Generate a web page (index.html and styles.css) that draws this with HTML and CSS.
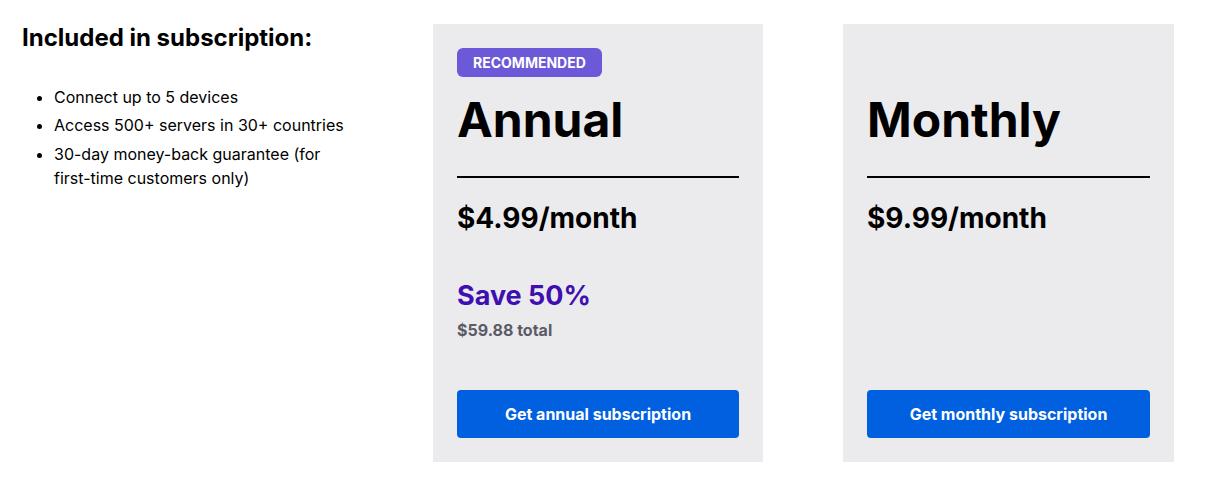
FILE: index.html
```html
<!DOCTYPE html>
<html>
  <head>
    <meta charset="UTF-8">
    <meta name="viewport" content="width=device-width, initial-scale=1.0">
    <title>Subscription plans</title>
    <link rel="stylesheet" href="styles.css">
  </head>
  <body>
  <div id="plans">
    <!-- what you get -->
    <div class="included">
      <h2>Included in subscription:</h2>
      <ul>
        <li>Connect up to 5 devices</li>
        <li>Access 500+ servers in 30+ countries</li>
        <li>30-day money-back guarantee (for first-time customers only)</li>
      </ul>
    </div>

    <!-- annual plan -->
    <div class="card">
      <span class="badge">Recommended</span>
      <h1>Annual</h1>
      <div class="price">$4.99/month</div>
      <div class="save">Save 50%</div>
      <div class="total">$59.88 total</div>
      <button class="buy">Get annual subscription</button>
    </div>

    <!-- monthly plan -->
    <div class="card">
      <span class="badge hide">Recommended</span>
      <h1>Monthly</h1>
      <div class="price">$9.99/month</div>
      <button class="buy">Get monthly subscription</button>
    </div>
  </div>
  </body>
</html>
```

FILE: styles.css
```css
/* pricing page */
body {
  margin: 0;
  font-family: Inter, "Liberation Sans", sans-serif;
  color: #000;
  background-color: #fff;
}
#plans {
  display: grid;
  grid-template-columns: 331px 330px 331px;
  column-gap: 80px;
  padding: 24px 22px 33px 22px;
}
.included h2 {
  margin: 0;
  font-size: 24px;
  line-height: 1.2;
  font-weight: 700;
}
.included ul {
  margin: 32px 0 0 0;
  padding-left: 32px;
}
.included li {
  font-size: 16px;
  line-height: 24px;
  margin-bottom: 4.5px;
}
.card {
  display: flex;
  flex-direction: column;
  align-items: flex-start;
  background-color: #ebebed;
  padding: 24px;
}
.badge {
  display: inline-block;
  background-color: #6b59d7;
  color: #fff;
  font-size: 14px;
  font-weight: 700;
  text-transform: uppercase;
  line-height: 21px;
  padding: 4px 16px;
  border-radius: 6px;
}
.hide {
  visibility: hidden;
}
.card h1 {
  align-self: stretch;
  margin: 14px 0 0 0;
  font-size: 48px;
  line-height: 1.2;
  font-weight: 700;
  padding-bottom: 27px;
  border-bottom: 2px solid #000;
}
.price {
  margin-top: 24px;
  font-size: 28px;
  line-height: 1.2;
  font-weight: 700;
}
.save {
  margin-top: 45px;
  font-size: 27px;
  line-height: 1.2;
  font-weight: 700;
  color: #3f0fb2;
}
.total {
  margin-top: 5px;
  font-size: 16px;
  line-height: 24px;
  font-weight: 700;
  color: #5b5b66;
}
.buy {
  align-self: stretch;
  margin-top: auto;
  height: 48px;
  border: none;
  border-radius: 4px;
  background-color: #0060df;
  color: #fff;
  font-family: inherit;
  font-size: 16px;
  font-weight: 700;
  cursor: pointer;
}
.total + .buy {
  margin-top: 48px;
}
```
